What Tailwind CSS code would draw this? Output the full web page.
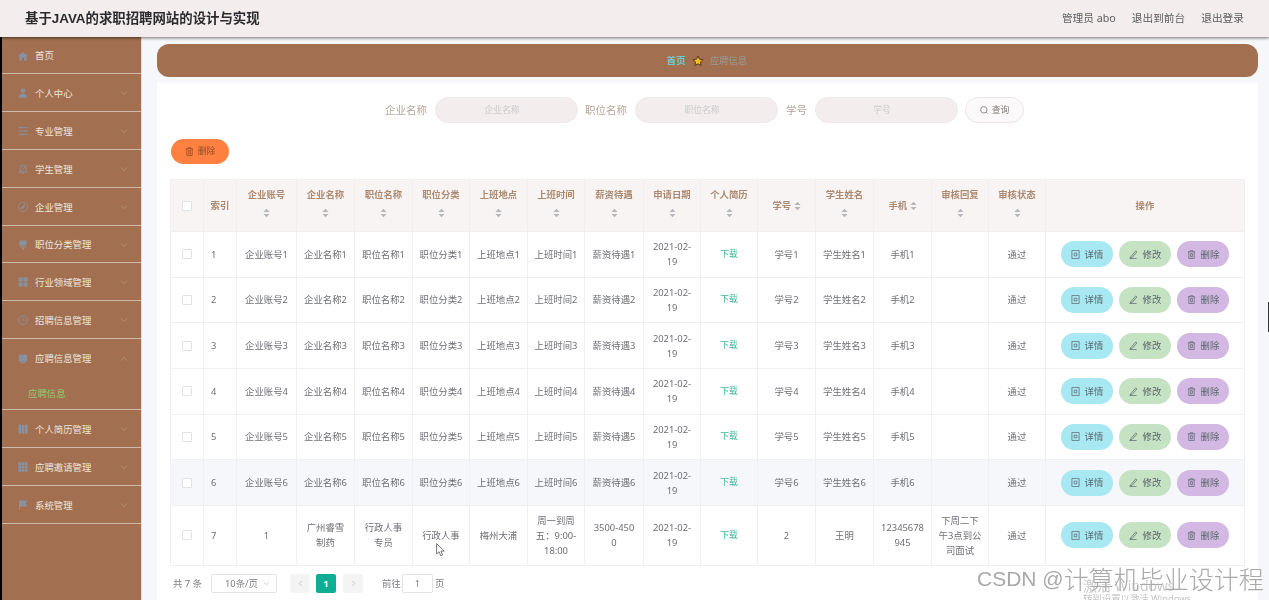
<!DOCTYPE html>
<html lang="zh">
<head>
<meta charset="utf-8">
<title>基于JAVA的求职招聘网站的设计与实现</title>
<script src="https://cdn.jsdelivr.net/npm/@tailwindcss/browser@4"></script>
</head>
<body class="m-0 bg-[#f5f7fa]">
<div class="relative w-[1269px] h-[600px] overflow-hidden flex flex-col blur-[0.35px] font-['Noto_Sans','Noto_Sans_CJK_SC',sans-serif] text-[9.4px] leading-[15px] text-[#6e7076]">

  <header class="relative z-10 h-[37px] shrink-0 flex items-center justify-between bg-[#f3eeed] pl-[25px] pr-[25px] shadow-[0_1px_3px_rgba(0,0,0,0.55)]">
    <div class="font-['Liberation_Sans','Noto_Sans_CJK_SC',sans-serif] text-[13.4px] font-bold text-[#2a2a2e]">基于JAVA的求职招聘网站的设计与实现</div>
    <div class="flex gap-[16px] text-[10.7px] text-[#5c5c60]">
      <span>管理员 abo</span><span>退出到前台</span><span>退出登录</span>
    </div>
  </header>

  <div class="flex flex-1 min-h-0">
    <div class="w-[2px] bg-black shrink-0"></div>
    <aside class="w-[140px] shrink-0 bg-[#a27050] border-r border-[#e6dcd5] text-[9.4px] text-[#efe6df] [&>div]:h-[38px] [&>div]:flex [&>div]:items-center [&>div]:border-b [&>div]:border-[#cdb7a8] [&>div]:pt-px [&>div]:pl-[16px] [&>div]:pr-[13px] [&>div]:gap-[7px] [&_.ico]:w-[10px] [&_.ico]:h-[10px] [&_.ico]:shrink-0 [&_.ico]:text-[#8791a0] [&_.chev]:ml-auto [&_.chev]:w-[8px] [&_.chev]:h-[8px] [&_.chev]:text-[#b98f73]">
      <div class="!h-[37px]">
        <svg class="ico" viewBox="0 0 10 10" fill="currentColor"><path d="M5 .8 0 5.2h1.4V9.6h2.6V6.6h2v3h2.6V5.2H10z"/></svg>
        <span>首页</span>
      </div>
      <div>
        <svg class="ico" viewBox="0 0 10 10" fill="currentColor"><circle cx="5" cy="2.8" r="2.4"/><path d="M.6 9.8c0-3 2-4 4.4-4s4.4 1 4.4 4z"/></svg>
        <span>个人中心</span>
        <svg class="chev" viewBox="0 0 8 8" fill="none" stroke="currentColor"><path d="m1 2.5 3 3 3-3"/></svg>
      </div>
      <div>
        <svg class="ico" viewBox="0 0 10 10" fill="none" stroke="currentColor" stroke-width=".9"><path d="M0 1.6h10M0 5h10M0 8.4h10"/><path d="M3 .6v2M7 4v2M4 7.4v2" stroke-width="1.4"/></svg>
        <span>专业管理</span>
        <svg class="chev" viewBox="0 0 8 8" fill="none" stroke="currentColor"><path d="m1 2.5 3 3 3-3"/></svg>
      </div>
      <div>
        <svg class="ico" viewBox="0 0 10 10" fill="none" stroke="currentColor" stroke-width=".9"><path d="M1 8h8L8 6.5V4a3 3 0 0 0-6 0v2.500zM4 9.300h2M1 9.500 9 .5"/></svg>
        <span>学生管理</span>
        <svg class="chev" viewBox="0 0 8 8" fill="none" stroke="currentColor"><path d="m1 2.5 3 3 3-3"/></svg>
      </div>
      <div>
        <svg class="ico" viewBox="0 0 10 10" fill="none" stroke="currentColor" stroke-width=".9"><circle cx="5" cy="5" r="4.500"/><path d="M6.700 3.300 5.600 5.600 3.300 6.700 4.400 4.400z" fill="currentColor"/></svg>
        <span>企业管理</span>
        <svg class="chev" viewBox="0 0 8 8" fill="none" stroke="currentColor"><path d="m1 2.5 3 3 3-3"/></svg>
      </div>
      <div class="!h-[37px]">
        <svg class="ico" viewBox="0 0 10 10" fill="currentColor"><path d="M1.500.5h7v5h-7zM2.500 6.300h5v1.200h-5zM4 8h2v1.700H4z"/></svg>
        <span>职位分类管理</span>
        <svg class="chev" viewBox="0 0 8 8" fill="none" stroke="currentColor"><path d="m1 2.5 3 3 3-3"/></svg>
      </div>
      <div>
        <svg class="ico" viewBox="0 0 10 10" fill="currentColor"><path d="M.5.500h4v4h-4zM5.500.500h4v4h-4zM.5 5.500h4v4h-4zM5.500 5.500h4v4h-4z"/></svg>
        <span>行业领域管理</span>
        <svg class="chev" viewBox="0 0 8 8" fill="none" stroke="currentColor"><path d="m1 2.5 3 3 3-3"/></svg>
      </div>
      <div>
        <svg class="ico" viewBox="0 0 10 10" fill="none" stroke="currentColor" stroke-width=".9"><circle cx="5" cy="5" r="4.500"/><path d="M5 2.200V5.300h2.400"/></svg>
        <span>招聘信息管理</span>
        <svg class="chev" viewBox="0 0 8 8" fill="none" stroke="currentColor"><path d="m1 2.5 3 3 3-3"/></svg>
      </div>
      <div class="!h-[71px] !block !pl-0 !pr-0">
        <div class="h-[37px] flex items-center gap-[7px] pl-[16px] pr-[13px]">
          <svg class="ico" viewBox="0 0 10 10" fill="currentColor"><path d="M.8.800h8.400v6.600H.8zM2.500 8h5v1.300h-5z"/></svg>
          <span>应聘信息管理</span>
          <svg class="chev" viewBox="0 0 8 8" fill="none" stroke="currentColor"><path d="m1 5.500 3-3 3 3"/></svg>
        </div>
        <div class="h-[32px] flex items-center pl-[26px] text-[#8fcb6e]">应聘信息</div>
      </div>
      <div>
        <svg class="ico" viewBox="0 0 10 10" fill="currentColor"><path d="M.5.800h2.500v8.700H.5zM3.700.800h2.600v8.700H3.700zM7 .8h2.500v8.700H7z"/></svg>
        <span>个人简历管理</span>
        <svg class="chev" viewBox="0 0 8 8" fill="none" stroke="currentColor"><path d="m1 2.5 3 3 3-3"/></svg>
      </div>
      <div>
        <svg class="ico" viewBox="0 0 10 10" fill="currentColor"><path d="M.3.300h2.800v2.800H.3zM3.600.300h2.800v2.800H3.600zM6.900.300h2.800v2.800H6.900zM.3 3.600h2.800v2.800H.3zM3.600 3.600h2.800v2.800H3.600zM6.900 3.600h2.800v2.800H6.900zM.3 6.900h2.800v2.800H.3zM3.600 6.900h2.800v2.800H3.600zM6.900 6.900h2.800v2.800H6.900z"/></svg>
        <span>应聘邀请管理</span>
        <svg class="chev" viewBox="0 0 8 8" fill="none" stroke="currentColor"><path d="m1 2.5 3 3 3-3"/></svg>
      </div>
      <div>
        <svg class="ico" viewBox="0 0 10 10" fill="currentColor"><path d="M1 .5h8.500L7.600 3.500l1.900 3H2v3.200H1z"/></svg>
        <span>系统管理</span>
        <svg class="chev" viewBox="0 0 8 8" fill="none" stroke="currentColor"><path d="m1 2.5 3 3 3-3"/></svg>
      </div>
    </aside>

    <main class="w-[1127px] pl-[15px] pr-[11px] pt-[7px] flex flex-col gap-[6px]">
      <nav class="h-[33px] shrink-0 rounded-[12px] bg-[#a27050] flex items-center justify-center gap-[6px] pr-px">
        <span class="font-bold text-[#6cc9cf]">首页</span>
        <svg class="w-[12px] h-[12px]" viewBox="0 0 12 12"><path d="m6 .9 1.500 3.300 3.600.4-2.700 2.400.8 3.600L6 8.800l-3.200 1.800.8-3.600L.9 4.600l3.600-.4z" fill="#f5bd22" stroke="#5a3a20" stroke-width="1"/></svg>
        <span class="text-[#9b9a98]">应聘信息</span>
      </nav>

      <section class="flex-1 bg-white pl-[13px] pr-[13px]">
        <form class="h-[26px] mt-[14px] flex items-center pl-[215px] text-[10.5px] text-[#b7a596]">
          <label class="w-[42px] shrink-0">企业名称</label>
          <div class="ml-[8px] w-[143px] h-[26px] pr-[9px] rounded-full bg-[#f3eeed] border border-[#eeeaea] flex items-center justify-center text-[8.800px] text-[#c9c9cb]">企业名称</div>
          <label class="ml-[7px] w-[43px] shrink-0">职位名称</label>
          <div class="ml-[7px] w-[143px] h-[26px] pr-[9px] rounded-full bg-[#f3eeed] border border-[#eeeaea] flex items-center justify-center text-[8.800px] text-[#c9c9cb]">职位名称</div>
          <label class="ml-[8px] w-[21px] shrink-0">学号</label>
          <div class="ml-[8px] w-[143px] h-[26px] pr-[9px] rounded-full bg-[#f3eeed] border border-[#eeeaea] flex items-center justify-center text-[8.800px] text-[#c9c9cb]">学号</div>
          <button type="button" class="ml-[7px] w-[59px] h-[26px] rounded-full bg-[#fbf9f9] border border-[#ebe6e6] flex items-center justify-center gap-[4px] text-[8.800px] text-[#7d7672]">
            <svg class="w-[8px] h-[8px]" viewBox="0 0 8 8" fill="none" stroke="currentColor" stroke-width=".8"><circle cx="3.800" cy="3.800" r="3.200"/><path d="m6 6 1.500 1.500"/></svg>
            <span>查询</span>
          </button>
        </form>

        <button type="button" class="ml-px mt-[16px] w-[58px] h-[25px] rounded-full bg-[#ff8142] flex items-center justify-center gap-[4px] text-[8.800px] text-[#8a4a2a]">
          <svg class="w-[9px] h-[9px]" viewBox="0 0 10 10" fill="none" stroke="currentColor" stroke-width=".8"><path d="M1 2h8M3.500 2V.8h3V2M2 2v7.400h6V2M4 4v3.500h2V4z"/></svg>
          <span>删除</span>
        </button>

        <table class="mt-[15px] w-[1075px] table-fixed border-collapse text-center [&_td]:border [&_td]:border-[#eef0f4] [&_td]:p-0 [&_td]:whitespace-nowrap [&_th]:border [&_th]:border-[#f1eeee] [&_th]:p-0 [&_th]:font-bold [&_th]:text-[#ab8a71] [&_th]:bg-[#f7f4f3] [&_th]:whitespace-nowrap [&_th]:leading-[18px] [&_th:has(br)]:pb-[4px] [&_tbody_tr]:h-[45.67px] [&_.box]:block [&_.box]:w-[10px] [&_.box]:h-[10px] [&_.box]:mx-auto [&_.box]:rounded-[1px] [&_.box]:border [&_.box]:border-[#e2e2e6] [&_.box]:bg-white [&_.sort]:inline-block [&_.sort]:w-[7px] [&_.sort]:h-[10px] [&_.sort]:align-middle [&_.sort]:text-[#b4b6ba] [&_.dl]:text-[#3fb8a0] [&_.dl]:text-[8.800px] [&_.acts]:flex [&_.acts]:justify-center [&_.acts]:gap-[6px] [&_.act]:w-[52px] [&_.act]:h-[26px] [&_.act]:rounded-full [&_.act]:flex [&_.act]:items-center [&_.act]:justify-center [&_.act]:gap-[5px] [&_.act]:text-[#59666b] [&_.act_svg]:w-[9px] [&_.act_svg]:h-[9px] [&_.b1]:bg-[#a8e8f2] [&_.b2]:bg-[#c5e2c3] [&_.b3]:bg-[#d2b8e2] [&_.idx]:text-left [&_.idx]:pl-[7px]">
          <colgroup>
            <col class="w-[33px]"><col class="w-[33px]"><col class="w-[60px]"><col class="w-[58px]"><col class="w-[58px]"><col class="w-[57px]"><col class="w-[58px]"><col class="w-[57px]"><col class="w-[59px]"><col class="w-[57px]"><col class="w-[57px]"><col class="w-[58px]"><col class="w-[58px]"><col class="w-[58px]"><col class="w-[57px]"><col class="w-[57px]"><col>
          </colgroup>
          <thead>
            <tr class="h-[52px]">
              <th><span class="box"></span></th>
              <th>索引</th>
              <th>企业账号<br><svg class="sort" viewBox="0 0 7 10" fill="currentColor"><path d="M3.500.8 6.500 4H.5zM3.500 9.200.5 6h6z"/></svg></th>
              <th>企业名称<br><svg class="sort" viewBox="0 0 7 10" fill="currentColor"><path d="M3.500.8 6.500 4H.5zM3.500 9.200.5 6h6z"/></svg></th>
              <th>职位名称<br><svg class="sort" viewBox="0 0 7 10" fill="currentColor"><path d="M3.500.8 6.500 4H.5zM3.500 9.200.5 6h6z"/></svg></th>
              <th>职位分类<br><svg class="sort" viewBox="0 0 7 10" fill="currentColor"><path d="M3.500.8 6.500 4H.5zM3.500 9.200.5 6h6z"/></svg></th>
              <th>上班地点<br><svg class="sort" viewBox="0 0 7 10" fill="currentColor"><path d="M3.500.8 6.500 4H.5zM3.500 9.200.5 6h6z"/></svg></th>
              <th>上班时间<br><svg class="sort" viewBox="0 0 7 10" fill="currentColor"><path d="M3.500.8 6.500 4H.5zM3.500 9.200.5 6h6z"/></svg></th>
              <th>薪资待遇<br><svg class="sort" viewBox="0 0 7 10" fill="currentColor"><path d="M3.500.8 6.500 4H.5zM3.500 9.200.5 6h6z"/></svg></th>
              <th>申请日期<br><svg class="sort" viewBox="0 0 7 10" fill="currentColor"><path d="M3.500.8 6.500 4H.5zM3.500 9.200.5 6h6z"/></svg></th>
              <th>个人简历<br><svg class="sort" viewBox="0 0 7 10" fill="currentColor"><path d="M3.500.8 6.500 4H.5zM3.500 9.200.5 6h6z"/></svg></th>
              <th>学号 <svg class="sort" viewBox="0 0 7 10" fill="currentColor"><path d="M3.500.8 6.500 4H.5zM3.500 9.200.5 6h6z"/></svg></th>
              <th>学生姓名<br><svg class="sort" viewBox="0 0 7 10" fill="currentColor"><path d="M3.500.8 6.500 4H.5zM3.500 9.200.5 6h6z"/></svg></th>
              <th>手机 <svg class="sort" viewBox="0 0 7 10" fill="currentColor"><path d="M3.500.8 6.500 4H.5zM3.500 9.200.5 6h6z"/></svg></th>
              <th>审核回复<br><svg class="sort" viewBox="0 0 7 10" fill="currentColor"><path d="M3.500.8 6.500 4H.5zM3.500 9.200.5 6h6z"/></svg></th>
              <th>审核状态<br><svg class="sort" viewBox="0 0 7 10" fill="currentColor"><path d="M3.500.8 6.500 4H.5zM3.500 9.200.5 6h6z"/></svg></th>
              <th>操作</th>
            </tr>
          </thead>
          <tbody>
            <tr><td><span class="box"></span></td><td class="idx">1</td><td>企业账号1</td><td>企业名称1</td><td>职位名称1</td><td>职位分类1</td><td>上班地点1</td><td>上班时间1</td><td>薪资待遇1</td><td>2021-02-<br>19</td><td class="dl">下载</td><td>学号1</td><td>学生姓名1</td><td>手机1</td><td></td><td>通过</td>
              <td><div class="acts">
                <button class="act b1"><svg viewBox="0 0 10 10" fill="none" stroke="currentColor" stroke-width=".8"><path d="M1 .5h8v9H1zM3.500 3.500h3v3h-3z"/></svg>详情</button>
                <button class="act b2"><svg viewBox="0 0 10 10" fill="none" stroke="currentColor" stroke-width=".8"><path d="M2 7.500 7.500 1l1.300 1.200-5.500 6.300-2 .5zM.5 9.500h8"/></svg>修改</button>
                <button class="act b3"><svg viewBox="0 0 10 10" fill="none" stroke="currentColor" stroke-width=".8"><path d="M1 2h8M3.500 2V.8h3V2M2 2v7.400h6V2M4 4v3.500h2V4z"/></svg>删除</button>
              </div></td></tr>
            <tr><td><span class="box"></span></td><td class="idx">2</td><td>企业账号2</td><td>企业名称2</td><td>职位名称2</td><td>职位分类2</td><td>上班地点2</td><td>上班时间2</td><td>薪资待遇2</td><td>2021-02-<br>19</td><td class="dl">下载</td><td>学号2</td><td>学生姓名2</td><td>手机2</td><td></td><td>通过</td>
              <td><div class="acts">
                <button class="act b1"><svg viewBox="0 0 10 10" fill="none" stroke="currentColor" stroke-width=".8"><path d="M1 .5h8v9H1zM3.500 3.500h3v3h-3z"/></svg>详情</button>
                <button class="act b2"><svg viewBox="0 0 10 10" fill="none" stroke="currentColor" stroke-width=".8"><path d="M2 7.500 7.500 1l1.300 1.200-5.500 6.300-2 .5zM.5 9.500h8"/></svg>修改</button>
                <button class="act b3"><svg viewBox="0 0 10 10" fill="none" stroke="currentColor" stroke-width=".8"><path d="M1 2h8M3.500 2V.8h3V2M2 2v7.400h6V2M4 4v3.500h2V4z"/></svg>删除</button>
              </div></td></tr>
            <tr><td><span class="box"></span></td><td class="idx">3</td><td>企业账号3</td><td>企业名称3</td><td>职位名称3</td><td>职位分类3</td><td>上班地点3</td><td>上班时间3</td><td>薪资待遇3</td><td>2021-02-<br>19</td><td class="dl">下载</td><td>学号3</td><td>学生姓名3</td><td>手机3</td><td></td><td>通过</td>
              <td><div class="acts">
                <button class="act b1"><svg viewBox="0 0 10 10" fill="none" stroke="currentColor" stroke-width=".8"><path d="M1 .5h8v9H1zM3.500 3.500h3v3h-3z"/></svg>详情</button>
                <button class="act b2"><svg viewBox="0 0 10 10" fill="none" stroke="currentColor" stroke-width=".8"><path d="M2 7.500 7.500 1l1.300 1.200-5.500 6.300-2 .5zM.5 9.500h8"/></svg>修改</button>
                <button class="act b3"><svg viewBox="0 0 10 10" fill="none" stroke="currentColor" stroke-width=".8"><path d="M1 2h8M3.500 2V.8h3V2M2 2v7.400h6V2M4 4v3.500h2V4z"/></svg>删除</button>
              </div></td></tr>
            <tr><td><span class="box"></span></td><td class="idx">4</td><td>企业账号4</td><td>企业名称4</td><td>职位名称4</td><td>职位分类4</td><td>上班地点4</td><td>上班时间4</td><td>薪资待遇4</td><td>2021-02-<br>19</td><td class="dl">下载</td><td>学号4</td><td>学生姓名4</td><td>手机4</td><td></td><td>通过</td>
              <td><div class="acts">
                <button class="act b1"><svg viewBox="0 0 10 10" fill="none" stroke="currentColor" stroke-width=".8"><path d="M1 .5h8v9H1zM3.500 3.500h3v3h-3z"/></svg>详情</button>
                <button class="act b2"><svg viewBox="0 0 10 10" fill="none" stroke="currentColor" stroke-width=".8"><path d="M2 7.500 7.500 1l1.300 1.200-5.500 6.300-2 .5zM.5 9.500h8"/></svg>修改</button>
                <button class="act b3"><svg viewBox="0 0 10 10" fill="none" stroke="currentColor" stroke-width=".8"><path d="M1 2h8M3.500 2V.8h3V2M2 2v7.400h6V2M4 4v3.500h2V4z"/></svg>删除</button>
              </div></td></tr>
            <tr><td><span class="box"></span></td><td class="idx">5</td><td>企业账号5</td><td>企业名称5</td><td>职位名称5</td><td>职位分类5</td><td>上班地点5</td><td>上班时间5</td><td>薪资待遇5</td><td>2021-02-<br>19</td><td class="dl">下载</td><td>学号5</td><td>学生姓名5</td><td>手机5</td><td></td><td>通过</td>
              <td><div class="acts">
                <button class="act b1"><svg viewBox="0 0 10 10" fill="none" stroke="currentColor" stroke-width=".8"><path d="M1 .5h8v9H1zM3.500 3.500h3v3h-3z"/></svg>详情</button>
                <button class="act b2"><svg viewBox="0 0 10 10" fill="none" stroke="currentColor" stroke-width=".8"><path d="M2 7.500 7.500 1l1.300 1.200-5.500 6.300-2 .5zM.5 9.500h8"/></svg>修改</button>
                <button class="act b3"><svg viewBox="0 0 10 10" fill="none" stroke="currentColor" stroke-width=".8"><path d="M1 2h8M3.500 2V.8h3V2M2 2v7.400h6V2M4 4v3.500h2V4z"/></svg>删除</button>
              </div></td></tr>
            <tr class="bg-[#f5f7fa]"><td><span class="box"></span></td><td class="idx">6</td><td>企业账号6</td><td>企业名称6</td><td>职位名称6</td><td>职位分类6</td><td>上班地点6</td><td>上班时间6</td><td>薪资待遇6</td><td>2021-02-<br>19</td><td class="dl">下载</td><td>学号6</td><td>学生姓名6</td><td>手机6</td><td></td><td>通过</td>
              <td><div class="acts">
                <button class="act b1"><svg viewBox="0 0 10 10" fill="none" stroke="currentColor" stroke-width=".8"><path d="M1 .5h8v9H1zM3.500 3.500h3v3h-3z"/></svg>详情</button>
                <button class="act b2"><svg viewBox="0 0 10 10" fill="none" stroke="currentColor" stroke-width=".8"><path d="M2 7.500 7.500 1l1.300 1.200-5.500 6.300-2 .5zM.5 9.500h8"/></svg>修改</button>
                <button class="act b3"><svg viewBox="0 0 10 10" fill="none" stroke="currentColor" stroke-width=".8"><path d="M1 2h8M3.500 2V.8h3V2M2 2v7.400h6V2M4 4v3.500h2V4z"/></svg>删除</button>
              </div></td></tr>
            <tr class="!h-[60px]"><td><span class="box"></span></td><td class="idx">7</td><td>1</td><td>广州睿雪<br>制药</td><td>行政人事<br>专员</td><td>行政人事</td><td>梅州大浦</td><td>周一到周<br>五：9:00-<br>18:00</td><td>3500-450<br>0</td><td>2021-02-<br>19</td><td class="dl">下载</td><td>2</td><td>王明</td><td>12345678<br>945</td><td>下周二下<br>午3点到公<br>司面试</td><td>通过</td>
              <td><div class="acts">
                <button class="act b1"><svg viewBox="0 0 10 10" fill="none" stroke="currentColor" stroke-width=".8"><path d="M1 .5h8v9H1zM3.500 3.500h3v3h-3z"/></svg>详情</button>
                <button class="act b2"><svg viewBox="0 0 10 10" fill="none" stroke="currentColor" stroke-width=".8"><path d="M2 7.500 7.500 1l1.300 1.200-5.500 6.300-2 .5zM.5 9.500h8"/></svg>修改</button>
                <button class="act b3"><svg viewBox="0 0 10 10" fill="none" stroke="currentColor" stroke-width=".8"><path d="M1 2h8M3.500 2V.8h3V2M2 2v7.400h6V2M4 4v3.500h2V4z"/></svg>删除</button>
              </div></td></tr>
          </tbody>
        </table>

        <div class="mt-[8px] h-[20px] flex items-center pl-[3px] text-[9.400px] text-[#7d7f84] whitespace-nowrap">
          <span class="w-[28px]">共 7 条</span>
          <div class="ml-[10px] w-[66px] h-[19px] rounded-[2px] border border-[#e2e3e6] flex items-center justify-between pl-[13px] pr-[6px]">
            <span>10条/页</span>
            <svg class="w-[7px] h-[7px] text-[#c0c4cc]" viewBox="0 0 8 8" fill="none" stroke="currentColor"><path d="m1 2.500 3 3 3-3"/></svg>
          </div>
          <div class="ml-[13px] w-[20px] h-[19px] rounded-[2px] bg-[#f4f4f5] flex items-center justify-center text-[#c0c4cc]">
            <svg class="w-[7px] h-[7px]" viewBox="0 0 8 8" fill="none" stroke="currentColor"><path d="M5.500 1 2.500 4l3 3"/></svg>
          </div>
          <div class="ml-[6px] w-[20px] h-[19px] rounded-[2px] bg-[#0fae94] flex items-center justify-center font-bold text-white">1</div>
          <div class="ml-[7px] w-[20px] h-[19px] rounded-[2px] bg-[#f4f4f5] flex items-center justify-center text-[#c0c4cc]">
            <svg class="w-[7px] h-[7px]" viewBox="0 0 8 8" fill="none" stroke="currentColor"><path d="m2.500 1 3 3-3 3"/></svg>
          </div>
          <span class="ml-[19px] w-[19px]">前往</span>
          <div class="ml-px w-[31px] h-[19px] rounded-[2px] border border-[#e2e3e6] flex items-center justify-center">1</div>
          <span class="ml-[2px]">页</span>
        </div>
      </section>
    </main>
  </div>

  <!-- overlays captured in the screenshot -->
  <svg class="absolute left-[436px] top-[543px] w-[10px] h-[14px] text-[#555]" viewBox="0 0 10 14" fill="#fff" stroke="currentColor" stroke-width=".8"><path d="M.6.600v10.400l2.500-2.200 1.700 4 1.800-.8-1.700-3.900h3.300z"/></svg>
  <div class="absolute left-[1083px] top-[577px] text-[14px] leading-[17px] text-[#c8c8c8]">激活 Windows</div>
  <div class="absolute left-[1083px] top-[593px] text-[9.400px] leading-[12px] text-[#c4c4c4]">转到设置以激活 Windows。</div>
  <div class="absolute left-[977px] top-[562px] h-[32px] flex items-center whitespace-nowrap font-['Liberation_Sans','Noto_Sans_CJK_SC',sans-serif] text-[#a9a9a9] [text-shadow:0_0_2px_#fff,0_0_1px_#fff]">
    <span class="text-[21px]">CSDN @</span><span class="text-[25px] font-['Noto_Sans_CJK_SC',sans-serif] font-light">计算机毕业设计程</span>
  </div>
  <div class="absolute left-[1268px] top-[302px] w-px h-[30px] bg-[#333]"></div>
</div>
</body>
</html>
